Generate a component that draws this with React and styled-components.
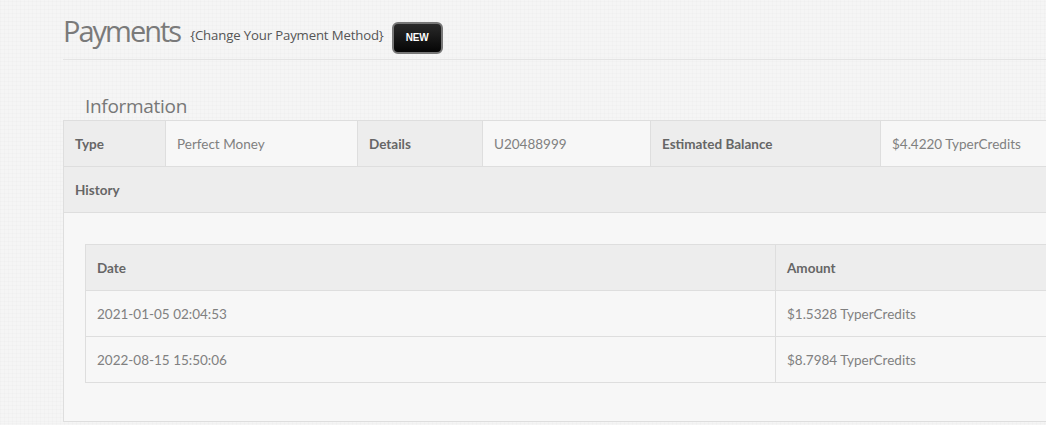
import React from "react";
import styled, { createGlobalStyle } from "styled-components";

const GlobalStyle = createGlobalStyle`
  html, body {
    margin: 0;
    padding: 0;
    overflow: hidden;
    background-color: #f5f5f5;
    background-image:
      repeating-linear-gradient(0deg, rgba(0,0,0,0.012) 0 1px, transparent 1px 4px),
      repeating-linear-gradient(90deg, rgba(0,0,0,0.012) 0 1px, transparent 1px 4px);
  }
`;

const Page = styled.div`
  width: 1100px;
  padding-left: 63px;
  font-family: Lato, "Liberation Sans", sans-serif;
  color: #777;
`;

const Header = styled.div`
  display: flex;
  align-items: center;
  height: 60px;
  box-sizing: border-box;
  padding-top: 2px;
  border-bottom: 1px solid #e4e4e4;
`;

const Title = styled.h1`
  margin: 0;
  font-family: "Open Sans", "Liberation Sans", sans-serif;
  font-weight: 400;
  font-size: 29px;
  letter-spacing: -2px;
  color: #7a7a7a;
`;

const Subtitle = styled.span`
  margin-left: 10px;
  margin-top: 9px;
  font-family: "Open Sans", "Liberation Sans", sans-serif;
  font-size: 13.2px;
  letter-spacing: -0.15px;
  color: #555;
`;

const Badge = styled.span`
  margin-left: 8px;
  margin-top: 14px;
  width: 51px;
  height: 32px;
  box-sizing: border-box;
  display: inline-flex;
  align-items: center;
  justify-content: center;
  border: 2px solid #777;
  border-radius: 6px;
  background: linear-gradient(#2a2a2a, #050505);
  color: #fff;
  font-family: "Liberation Sans", sans-serif;
  font-weight: 700;
  font-size: 10px;
  letter-spacing: -0.2px;
`;

const SectionTitle = styled.h2`
  margin: 33px 0 0 22px;
  font-family: "Open Sans", "Liberation Sans", sans-serif;
  font-weight: 400;
  font-size: 19px;
  letter-spacing: -0.3px;
  line-height: 27px;
  color: #777;
`;

const Table = styled.table`
  border-collapse: collapse;
  width: ${(p) => p.$width}px;
  table-layout: fixed;
  font-size: 13.5px;
`;

const Cell = styled.td`
  height: 46px;
  box-sizing: border-box;
  padding: 0 11px;
  border: 1px solid #dedede;
  background: ${(p) => (p.$head ? "#ededed" : "#f7f7f7")};
  color: ${(p) => (p.$head ? "#666" : "#808080")};
  font-weight: ${(p) => (p.$head ? 700 : 400)};
  text-align: left;
  white-space: nowrap;
`;

const NestedCell = styled.td`
  padding: 31px 0 38px 21px;
  border: 1px solid #dedede;
  background: #f7f7f7;
`;

const infoCols = [102, 192, 125, 168, 230, 223];

const history = [
  { date: "2021-01-05 02:04:53", amount: "$1.5328 TyperCredits" },
  { date: "2022-08-15 15:50:06", amount: "$8.7984 TyperCredits" },
];

export default function App() {
  return (
    <Page>
      <GlobalStyle />
      <Header>
        <Title>Payments</Title>
        <Subtitle>{"{Change Your Payment Method}"}</Subtitle>
        <Badge>NEW</Badge>
      </Header>
      <SectionTitle>Information</SectionTitle>
      <Table $width={1040}>
        <colgroup>
          {infoCols.map((w, i) => (
            <col key={i} style={{ width: w }} />
          ))}
        </colgroup>
        <tbody>
          <tr>
            <Cell $head>Type</Cell>
            <Cell>Perfect Money</Cell>
            <Cell $head>Details</Cell>
            <Cell>U20488999</Cell>
            <Cell $head>Estimated Balance</Cell>
            <Cell>$4.4220 TyperCredits</Cell>
          </tr>
          <tr>
            <Cell $head colSpan={6}>History</Cell>
          </tr>
          <tr>
            <NestedCell colSpan={6}>
              <Table $width={1000}>
                <colgroup>
                  <col style={{ width: 690 }} />
                  <col />
                </colgroup>
                <tbody>
                  <tr>
                    <Cell $head>Date</Cell>
                    <Cell $head>Amount</Cell>
                  </tr>
                  {history.map((h) => (
                    <tr key={h.date}>
                      <Cell>{h.date}</Cell>
                      <Cell>{h.amount}</Cell>
                    </tr>
                  ))}
                </tbody>
              </Table>
            </NestedCell>
          </tr>
        </tbody>
      </Table>
    </Page>
  );
}
